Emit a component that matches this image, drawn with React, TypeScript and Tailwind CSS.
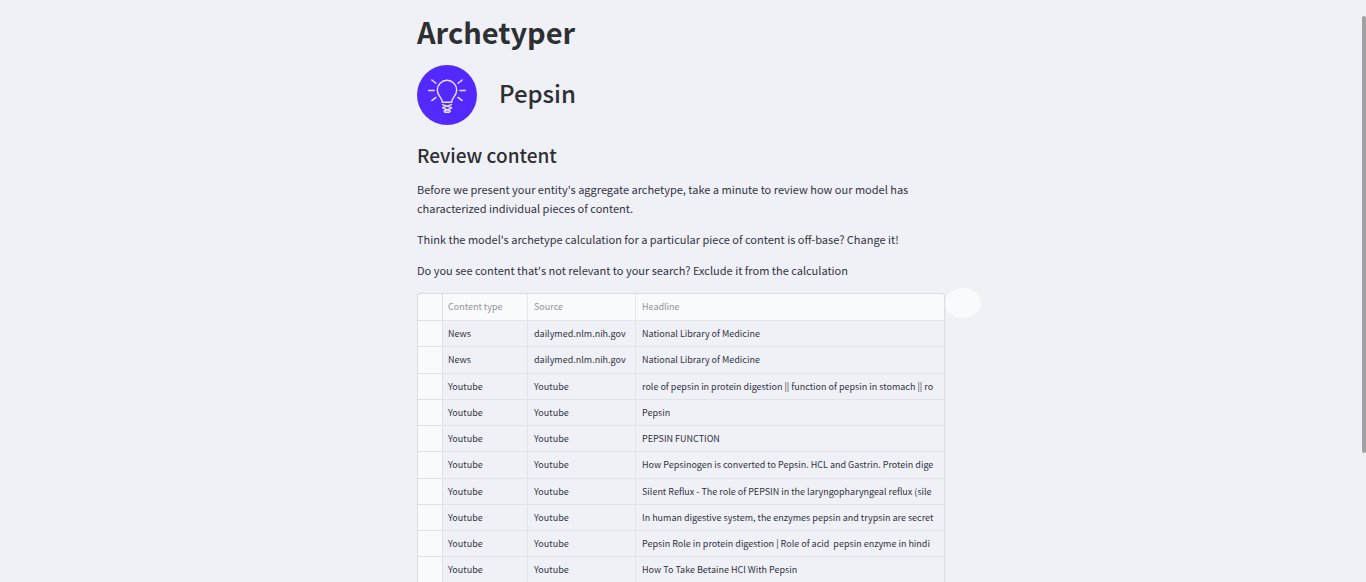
const rows = [
  ["News", "dailymed.nlm.nih.gov", "National Library of Medicine"],
  ["News", "dailymed.nlm.nih.gov", "National Library of Medicine"],
  ["Youtube", "Youtube", "role of pepsin in protein digestion || function of pepsin in stomach || ro"],
  ["Youtube", "Youtube", "Pepsin"],
  ["Youtube", "Youtube", "PEPSIN FUNCTION"],
  ["Youtube", "Youtube", "How Pepsinogen is converted to Pepsin. HCL and Gastrin. Protein dige"],
  ["Youtube", "Youtube", "Silent Reflux - The role of PEPSIN in the laryngopharyngeal reflux (sile"],
  ["Youtube", "Youtube", "In human digestive system, the enzymes pepsin and trypsin are secret"],
  ["Youtube", "Youtube", "Pepsin Role in protein digestion | Role of acid  pepsin enzyme in hindi"],
  ["Youtube", "Youtube", "How To Take Betaine HCl With Pepsin"],
];

function BulbLogo() {
  return (
    <svg viewBox="0 0 60 60" className="size-[60px] shrink-0" fill="none" aria-hidden="true">
      <circle cx="30" cy="30" r="30" fill="#5429ff" />
      <g stroke="#e9e2ff" strokeWidth="1.4" strokeLinecap="round">
        <path d="M25.3 37.3C25.3 32.5 20.3 31 20.3 25A9.7 9.7 0 0 1 39.7 25C39.7 31 34.7 32.5 34.7 37.3Z" />
        <path d="M14.8 15l4.2 3.2M11.7 25.5h5.4M14.8 35.6l4.2-3.2M45.2 15L41 18.2M48.3 25.5h-5.4M45.2 35.6L41 32.4" />
        <path d="M25.5 39.6l9 3M34.5 39.6l-8.6 2.8M25.7 42.8l7.8 3.4M34.5 43.2l-7.4 2.8M27.8 47.2h4.6" />
      </g>
    </svg>
  );
}

export default function App() {
  return (
    <main className="relative h-screen overflow-hidden bg-[#f0f1f6] font-['Noto_Sans_CJK_SC','Noto_Sans',sans-serif] text-[#31333f]">
      <div className="mx-auto w-full max-w-[532px] pt-3">
        <h1 className="text-[29px] leading-[38px] font-bold text-[#2d2f31]">Archetyper</h1>
        <div className="mt-[15px] flex items-center gap-[22px]">
          <BulbLogo />
          <h2 className="pb-1 text-[24px] leading-8 font-medium text-[#2d2f31]">Pepsin</h2>
        </div>
        <h3 className="mt-[15px] text-[19px] leading-[30px] font-medium text-[#2d2f31]">Review content</h3>
        <div className="mt-[10px] space-y-3 text-[11px] leading-[19px]">
          <p>
            Before we present your entity's aggregate archetype, take a minute to review how our model has
            characterized individual pieces of content.
          </p>
          <p>Think the model's archetype calculation for a particular piece of content is off-base? Change it!</p>
          <p>Do you see content that's not relevant to your search? Exclude it from the calculation</p>
        </div>
        <div className="relative mt-[13px] mr-1">
          <div className="overflow-hidden rounded-t-[3px] border border-b-0 border-[#dadce1]">
            <table className="w-full table-fixed border-separate border-spacing-0 text-left text-[9px] leading-4">
              <colgroup>
                <col className="w-[25px]" />
                <col className="w-[85px]" />
                <col className="w-[108px]" />
                <col />
              </colgroup>
              <thead>
                <tr className="h-[27px] bg-[#f9fafc] text-[#91949a]">
                  <td className="border-r border-b border-[#dfe1e6]" />
                  <th className="border-r border-b border-[#e3e5e9] px-[5px] py-0 font-normal">Content type</th>
                  <th className="border-r border-b border-[#e3e5e9] px-[6px] py-0 font-normal">Source</th>
                  <th className="border-b border-[#e3e5e9] px-[6px] py-0 font-normal">Headline</th>
                </tr>
              </thead>
              <tbody>
                {rows.map(([type, source, headline], i) => (
                  <tr key={i} className="h-[26px] nth-[4n+2]:h-[27px]">
                    <td className="border-r border-b border-[#dfe1e6] bg-[#f9fafc]" />
                    <td className="border-r border-b border-[#e1e3e8] px-[5px] py-0">{type}</td>
                    <td className="border-r border-b border-[#e1e3e8] px-[6px] py-0 whitespace-nowrap">{source}</td>
                    <td className="overflow-hidden border-b border-[#e1e3e8] py-0 pl-[6px] whitespace-pre">{headline}</td>
                  </tr>
                ))}
              </tbody>
            </table>
          </div>
          <button
            type="button"
            aria-label="View fullscreen"
            className="absolute -top-[5px] left-full h-[30px] w-9 rounded-[50%] bg-[#f9fafc]"
          />
        </div>
      </div>
      <div className="absolute top-4 right-0 h-[437px] w-1 rounded-xs bg-[#a1a1a1]" />
    </main>
  );
}
